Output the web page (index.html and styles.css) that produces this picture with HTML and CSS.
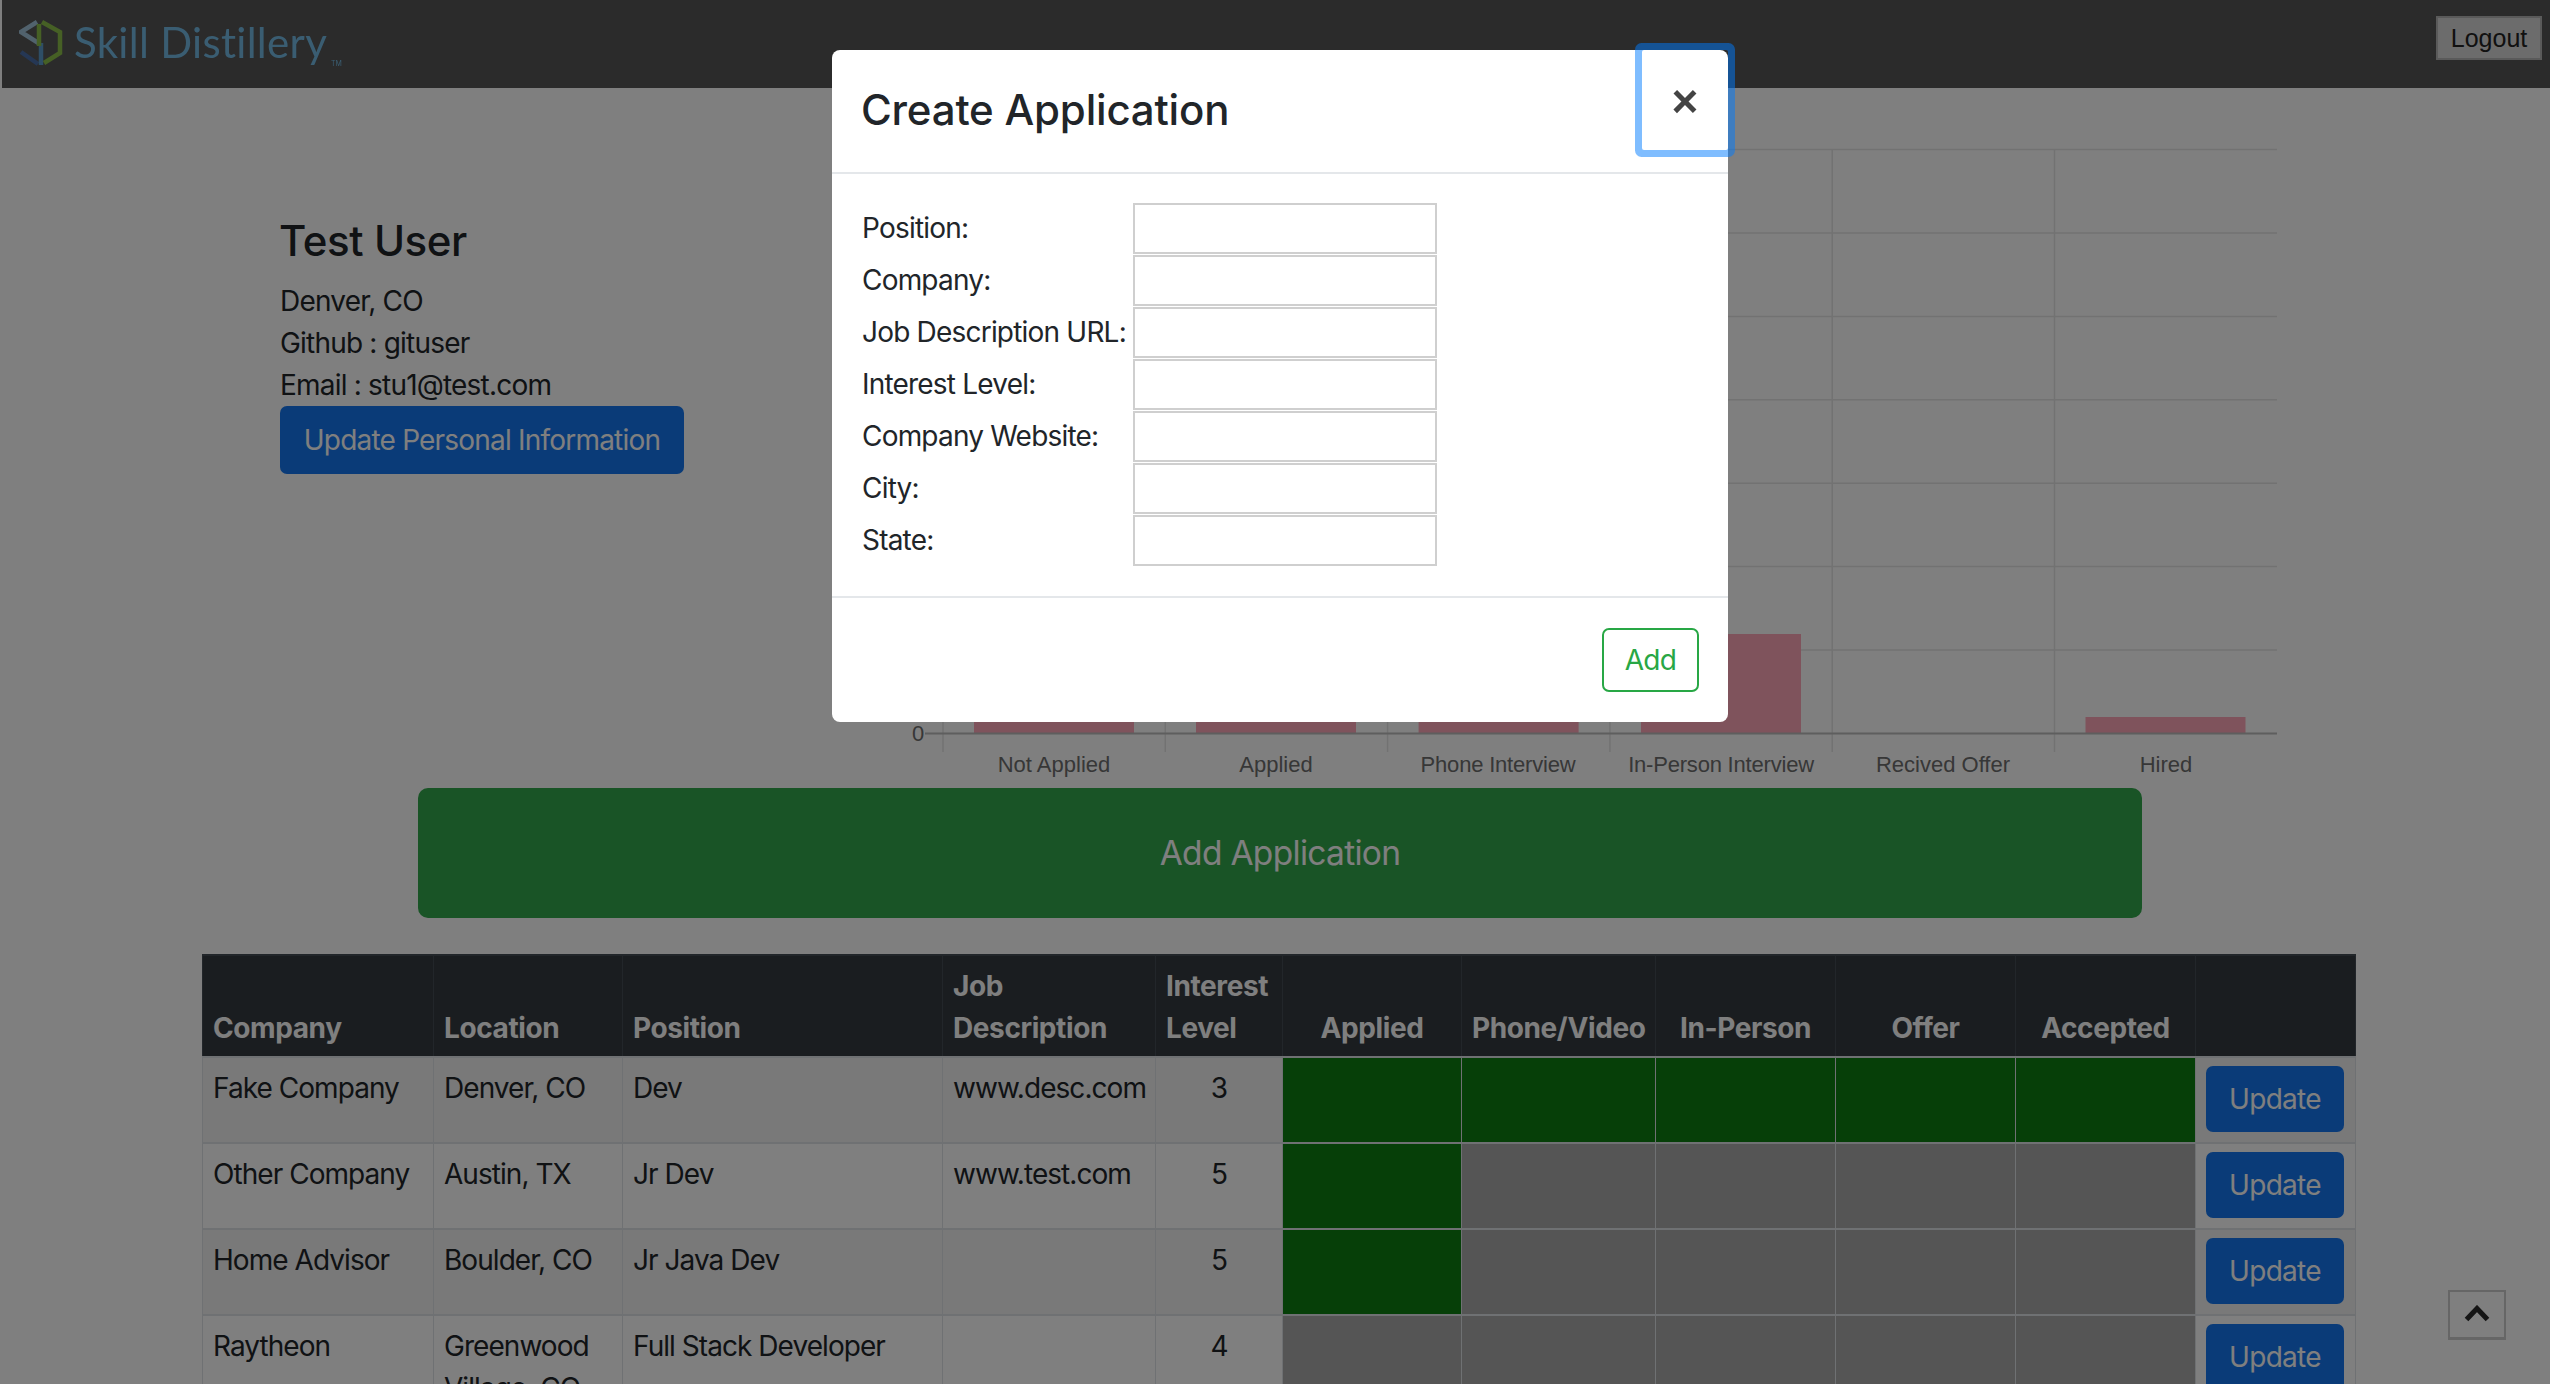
FILE: index.html
```html
<!DOCTYPE html>
<html lang="en">

<head>
    <meta charset="UTF-8">
    <meta name="viewport" content="width=device-width, initial-scale=1.0">
    <title>Skill Distillery</title>
    <link rel="stylesheet" href="styles.css">
</head>

<body>
    <nav class="navbar">
        <a class="brand">
            <svg class="brand-icon" viewBox="0 0 44 48" width="44" height="48">
                <path class="logo-blue" d="M18 3 2 13 21 25"/>
                <path class="logo-navy" d="M2 33 19 45"/>
                <path class="logo-mid" d="M22 24V46"/>
                <path class="logo-green" d="M20 5V27M23 3 41 13V34L25 44"/>
            </svg>
            <span class="brand-name">Skill Distillery</span><span class="brand-tm">TM</span>
        </a>
        <button class="btn-logout">Logout</button>
    </nav>

    <section class="top-row">
        <div class="profile">
            <h4>Test User</h4>
            <div>Denver, CO</div>
            <div>Github : gituser</div>
            <div>Email : stu1@test.com</div>
            <button class="btn btn-primary btn-personal">Update Personal Information</button>
        </div>

        <!-- bar chart, coordinates are the same as page pixels -->
        <svg class="chart" viewBox="880 88 1420 700" width="1420" height="700">
            <g class="grid">
                <path d="M943 149.5H2277M943 233H2277M943 316.4H2277M943 399.8H2277M943 483.2H2277M943 566.6H2277M943 650H2277"/>
                <path d="M943 149.5V752M1165.3 149.5V752M1387.6 149.5V752M1609.9 149.5V752M1832.2 149.5V752M2054.5 149.5V752"/>
            </g>
            <g class="bars">
                <rect x="974" y="650" width="160" height="83.5"/>
                <rect x="1196" y="566" width="160" height="167.5"/>
                <rect x="1418.6" y="650" width="160" height="83.5"/>
                <rect x="1641" y="634" width="160" height="99.5"/>
                <rect x="2085.5" y="717" width="160" height="16.5"/>
            </g>
            <path class="axis" d="M925 733.5H2277"/>
            <g class="chart-labels">
                <text x="918" y="741">0</text>
                <text x="1054" y="772">Not Applied</text>
                <text x="1276" y="772">Applied</text>
                <text class="label-tight" x="1498" y="772">Phone Interview</text>
                <text class="label-tight" x="1721" y="772">In-Person Interview</text>
                <text x="1943" y="772">Recived Offer</text>
                <text x="2166" y="772">Hired</text>
            </g>
        </svg>
    </section>

    <button class="btn btn-success btn-add-app">Add Application</button>

    <table class="app-table">
        <colgroup>
            <col class="col-company">
            <col class="col-location">
            <col class="col-position">
            <col class="col-desc">
            <col class="col-interest">
            <col class="col-applied">
            <col class="col-phone">
            <col class="col-status">
            <col class="col-status">
            <col class="col-status">
            <col class="col-update">
        </colgroup>
        <thead>
            <tr>
                <th>Company</th>
                <th>Location</th>
                <th>Position</th>
                <th>Job Description</th>
                <th>Interest Level</th>
                <th class="center">Applied</th>
                <th class="center">Phone/Video</th>
                <th class="center">In-Person</th>
                <th class="center">Offer</th>
                <th class="center">Accepted</th>
                <th></th>
            </tr>
        </thead>
        <tbody>
            <tr>
                <td>Fake Company</td>
                <td>Denver, CO</td>
                <td>Dev</td>
                <td>www.desc.com</td>
                <td class="center">3</td>
                <td class="done"></td>
                <td class="done"></td>
                <td class="done"></td>
                <td class="done"></td>
                <td class="done"></td>
                <td><button class="btn btn-primary btn-update">Update</button></td>
            </tr>
            <tr>
                <td>Other Company</td>
                <td>Austin, TX</td>
                <td>Jr Dev</td>
                <td>www.test.com</td>
                <td class="center">5</td>
                <td class="done"></td>
                <td class="todo"></td>
                <td class="todo"></td>
                <td class="todo"></td>
                <td class="todo"></td>
                <td><button class="btn btn-primary btn-update">Update</button></td>
            </tr>
            <tr>
                <td>Home Advisor</td>
                <td>Boulder, CO</td>
                <td>Jr Java Dev</td>
                <td></td>
                <td class="center">5</td>
                <td class="done"></td>
                <td class="todo"></td>
                <td class="todo"></td>
                <td class="todo"></td>
                <td class="todo"></td>
                <td><button class="btn btn-primary btn-update">Update</button></td>
            </tr>
            <tr>
                <td>Raytheon</td>
                <td>Greenwood Village, CO</td>
                <td>Full Stack Developer</td>
                <td></td>
                <td class="center">4</td>
                <td class="todo"></td>
                <td class="todo"></td>
                <td class="todo"></td>
                <td class="todo"></td>
                <td class="todo"></td>
                <td><button class="btn btn-primary btn-update">Update</button></td>
            </tr>
        </tbody>
    </table>

    <button class="to-top">
        <svg viewBox="0 0 26 17" width="26" height="17"><path d="M2.5 14.5 13 3.5 23.5 14.5"/></svg>
    </button>

    <div class="backdrop"></div>

    <div class="modal">
        <div class="modal-header">
            <h4>Create Application</h4>
            <button class="close">×</button>
        </div>
        <form class="modal-body">
            <label>Position:</label><input type="text">
            <label>Company:</label><input type="text">
            <label>Job Description URL:</label><input type="text">
            <label>Interest Level:</label><input type="text">
            <label>Company Website:</label><input type="text">
            <label>City:</label><input type="text">
            <label>State:</label><input type="text">
        </form>
        <div class="modal-footer">
            <button class="btn btn-outline-success">Add</button>
        </div>
    </div>
</body>

</html>
```

FILE: styles.css
```css
/* Page */

html,
body {
    height: 1384px;
    overflow: hidden;
}

body {
    margin: 0;
    font-family: Inter, "Liberation Sans", sans-serif;
    font-size: 28px;
    line-height: 42px;
    letter-spacing: -0.8px;
    color: #212529;
    background: #fff;
}

h4 {
    margin: 0;
    font-size: 42px;
    line-height: 50px;
    font-weight: 500;
    letter-spacing: -0.2px;
}

/* Header */

.navbar {
    display: flex;
    justify-content: space-between;
    height: 88px;
    margin-left: 2px;
    background: #565656;
}

.brand {
    display: flex;
    padding: 19px 0 0 17px;
    filter: blur(0.5px);
}

.brand-icon {
    margin-right: 11px;
}

.brand-icon path {
    fill: none;
    stroke-width: 4.5;
}

.logo-blue {
    stroke: #a3c4da;
}

.logo-navy {
    stroke: #4a6ea8;
}

.logo-mid {
    stroke: #5d9ccc;
}

.logo-green {
    stroke: #8cc04a;
}

.brand-name {
    margin-top: -2px;
    font-family: Lato, sans-serif;
    font-size: 42px;
    line-height: 50px;
    letter-spacing: 0.3px;
    color: #74bbe4;
}

.brand-tm {
    margin: 40px 0 0 4px;
    font-size: 7px;
    line-height: 10px;
    letter-spacing: 0;
    color: #74bbe4;
}

.btn-logout {
    width: 106px;
    height: 44px;
    margin: 16px 8px 0 0;
    padding: 0;
    font-family: "Liberation Sans", sans-serif;
    font-size: 25px;
    color: #222;
    background: #d8d8d8;
    border: 2px solid #b4b4b4;
}

/* Profile and chart */

.top-row {
    display: flex;
    height: 700px;
    padding-left: 280px;
}

.profile {
    width: 600px;
    padding-top: 128px;
}

.profile h4 {
    margin: 0 0 14px -1px;
    letter-spacing: -0.4px;
}

.chart {
    flex: none;
}

.grid path {
    fill: none;
    stroke: #e4e4e4;
    stroke-width: 1.5;
}

.axis {
    fill: none;
    stroke: #bcbcbc;
    stroke-width: 2;
}

.bars rect {
    fill: #ffa6b8;
}

.chart-labels text {
    font-family: "Liberation Sans", sans-serif;
    font-size: 22px;
    letter-spacing: 0;
    text-anchor: middle;
    fill: #6e6e6e;
}

.chart-labels .label-tight {
    letter-spacing: -0.2px;
}

/* Buttons */

.btn {
    display: block;
    padding: 0;
    font-family: inherit;
    font-size: 28px;
    line-height: 42px;
    letter-spacing: -0.7px;
    border-radius: 7px;
    border: none;
}

.btn-primary {
    color: #fff;
    background: #1476f0;
}

.btn-personal {
    width: 404px;
    height: 68px;
    letter-spacing: -0.8px;
}

.btn-update {
    width: 138px;
    height: 66px;
    margin-top: -1px;
}

.btn-success {
    color: #fff;
    background: #32a84c;
}

.btn-add-app {
    width: 1724px;
    height: 130px;
    margin-left: 418px;
    font-size: 33.5px;
    border-radius: 10px;
}

.btn-outline-success {
    width: 97px;
    height: 64px;
    color: #28a745;
    background: #fff;
    border: 2px solid #28a745;
}

/* Table */

.app-table {
    width: 2153px;
    margin: 36px 0 0 202px;
    table-layout: fixed;
    border-collapse: collapse;
}

.col-company {
    width: 231px;
}

.col-location {
    width: 189px;
}

.col-position {
    width: 320px;
}

.col-desc {
    width: 213px;
}

.col-interest {
    width: 127px;
}

.col-applied {
    width: 179px;
}

.col-phone {
    width: 194px;
}

.col-status {
    width: 180px;
}

.col-update {
    width: 160px;
}

th,
td {
    padding: 9px 10px;
    text-align: left;
    vertical-align: top;
    border: 1px solid #dee2e6;
    border-top-width: 2px;
}

th {
    padding-bottom: 7px;
    vertical-align: bottom;
    font-weight: 700;
    letter-spacing: -0.4px;
    color: #fff;
    background: #343a40;
    border-color: #454d55;
}

td {
    height: 66px;
    letter-spacing: -0.95px;
}

th.center,
td.center {
    text-align: center;
}

tbody tr:nth-child(odd) {
    background: #f2f2f2;
}

td.done {
    background: #0c7e10;
}

td.todo {
    background: #aaa;
}

/* Scroll to top */

.to-top {
    position: absolute;
    left: 2448px;
    top: 1290px;
    width: 58px;
    height: 50px;
    padding: 0;
    background: #fff;
    border: 2px solid #ccc;
    border-bottom-width: 3px;
}

.to-top path {
    fill: none;
    stroke: #2a2a2a;
    stroke-width: 5;
}

/* Modal */

.backdrop {
    position: fixed;
    top: 0;
    left: 0;
    width: 100%;
    height: 100%;
    background: rgba(0, 0, 0, 0.5);
}

.modal {
    position: absolute;
    left: 832px;
    top: 50px;
    width: 896px;
    background: #fff;
    border-radius: 8px;
}

.modal-header {
    box-sizing: border-box;
    height: 124px;
    padding: 35px 31px 0 29px;
    border-bottom: 2px solid #e4e7ea;
}

.close {
    position: absolute;
    top: 0;
    right: 0;
    width: 86px;
    height: 100px;
    padding: 0;
    font-family: "Liberation Sans", sans-serif;
    font-size: 46px;
    line-height: 102px;
    font-weight: 700;
    color: #444;
    background: transparent;
    border: none;
    box-shadow: 0 0 0 7px rgba(0, 123, 255, 0.5);
    border-radius: 2px;
}

.modal-body {
    display: grid;
    grid-template-columns: 271px 304px;
    grid-auto-rows: 51px;
    row-gap: 1px;
    padding: 29px 31px 30px 30px;
    align-items: center;
    border-bottom: 2px solid #e4e7ea;
}

.modal-body label {
    white-space: nowrap;
    margin-top: -2px;
}

.modal-body input {
    box-sizing: border-box;
    width: 304px;
    height: 51px;
    margin: 0;
    padding: 0;
    background: #fff;
    border: 2px solid #cfcfcf;
}

.modal-footer {
    display: flex;
    justify-content: flex-end;
    padding: 30px 29px 30px;
}
```
